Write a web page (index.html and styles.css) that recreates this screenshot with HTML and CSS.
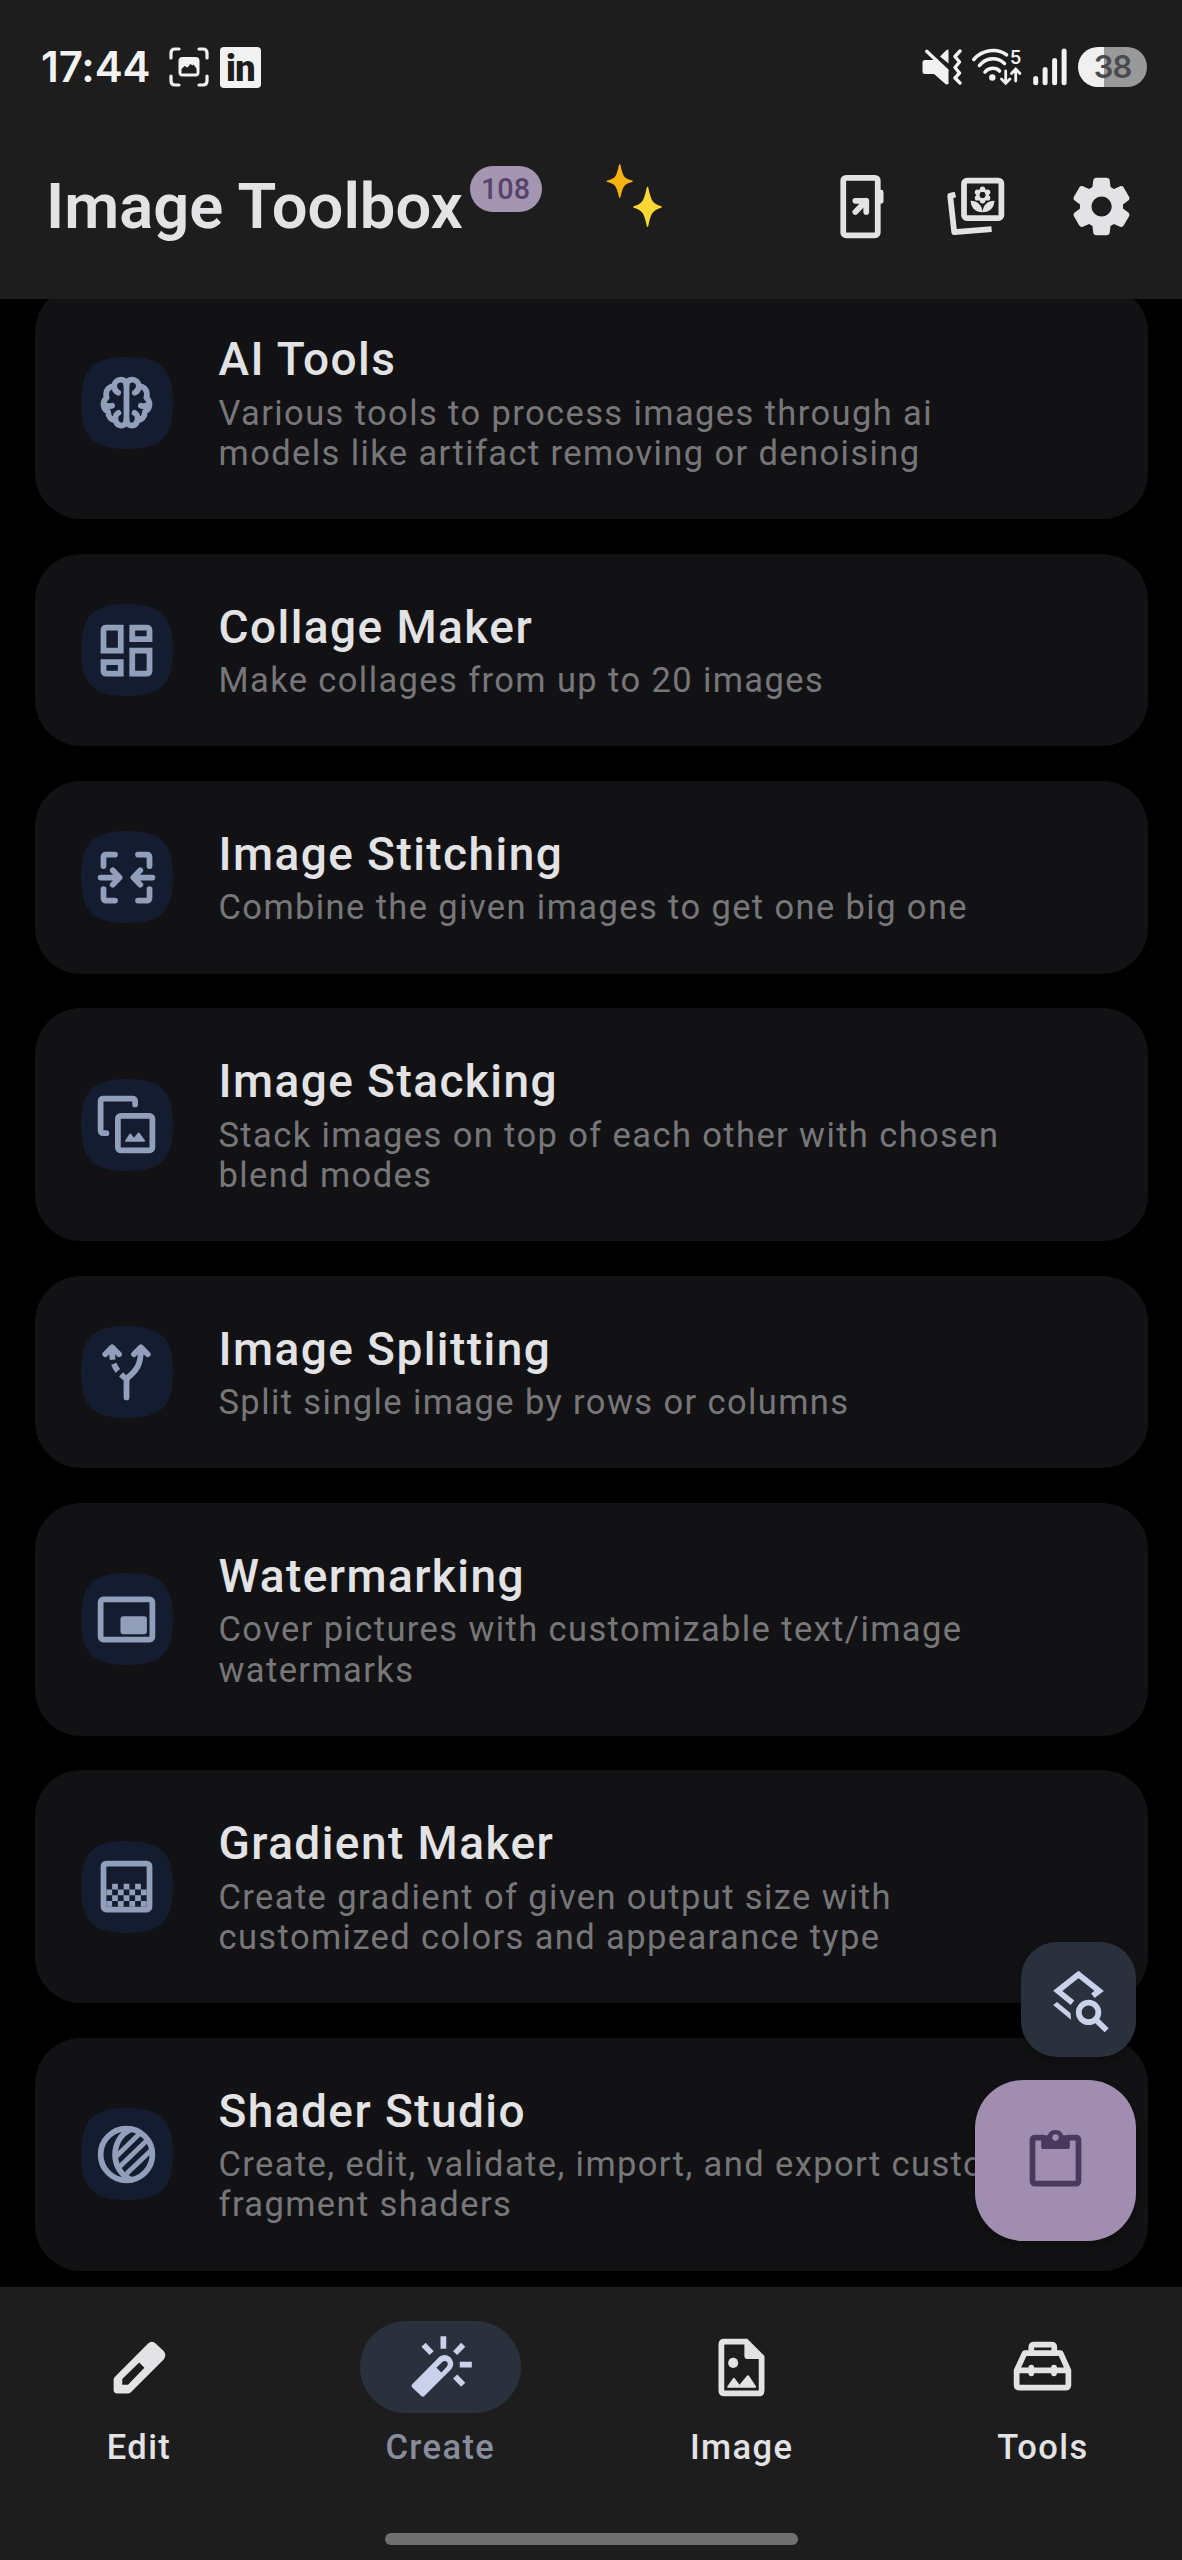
FILE: index.html
```html
<!DOCTYPE html>
<html lang="en">
<head>
<meta charset="utf-8">
<title>Image Toolbox</title>
<link rel="stylesheet" href="styles.css">
</head>
<body>
<svg class="defs" width="0" height="0" aria-hidden="true">
  <symbol id="squircle" viewBox="0 0 92 92"><path d="M46 0C80 0 92 12 92 46S80 92 46 92 0 80 0 46 12 0 46 0Z"/></symbol>
</svg>
<div class="screen">
  <header class="top">
    <div class="status">
      <span class="clock">17:44</span>
      <svg class="shot" width="40" height="40" viewBox="0 0 40 40"><path d="M2 11V6Q2 2 6 2H10M30 2H34Q38 2 38 6V11M38 29V34Q38 38 34 38H30M10 38H6Q2 38 2 34V29" fill="none" stroke="#f2f2f2" stroke-width="3.2" stroke-linecap="round"/><rect x="9.500" y="10" width="21" height="19.500" rx="4" fill="#f2f2f2"/><path d="M12.500 26.500V22l3-3 3 1.500 3-3.500 2 1.500 1-1 3 4v5z" fill="#1d1d1d"/></svg>
      <span class="linkedin">in</span>
      <span class="grow"></span>
      <svg width="40" height="38" viewBox="0 0 40 38" fill="#f2f2f2"><path d="M3 12H13L26.500 23.500V36L24 36.500 12 26H3Q.5 26 .5 23.500V14.500Q.5 12 3 12ZM26.500 2.500V15.500L18 8.500 24.500 2Q26.500 1 26.500 2.500Z"/><path d="M4.700 3.300L25 22.500M38 3L33 8.500 37.500 14 33 19.500 37.500 25 33 30 38 35" fill="none" stroke="#f2f2f2" stroke-width="3.400" stroke-linecap="round" stroke-linejoin="round"/></svg>
      <svg class="wifi" width="50" height="38" viewBox="0 0 50 38"><g fill="none" stroke="#f2f2f2" stroke-width="3.600" stroke-linecap="round"><path d="M1.800 11.500C10 1.800 25 -.5 34.500 6.800M7.500 17.500C13.500 9.500 25 8.500 32.500 15.500M13 24C16.500 19.500 24 19 27.500 23"/><path stroke-width="2.800" d="M33.700 23V35M29.500 31L33.700 35.200 37.900 31M43.700 33V21.500M39.500 25.500L43.700 21 47.900 25.500"/></g><circle cx="20.300" cy="29.500" r="3.200" fill="#f2f2f2"/><text x="38" y="15.500" class="band">5</text></svg>
      <svg class="signal" width="34" height="38" viewBox="0 0 34 38"><path d="M2.700 30.500V34.800M12.100 21.500V34.800M21.600 12.500V34.800M31.100 3V34.800" fill="none" stroke="#f2f2f2" stroke-width="5" stroke-linecap="round"/></svg>
      <span class="battery">38</span>
    </div>
    <div class="bar">
      <h1>Image Toolbox</h1>
      <span class="count">108</span>
      <svg class="sparkles" width="60" height="70" viewBox="0 0 60 70"><path fill="#f8b312" stroke="#f8b312" stroke-linejoin="round" stroke-width="1.500" d="M14.700 2C17 13.500 18.500 16.500 27 18.300 18.500 20.200 17 23 14.700 34 12.400 23 11 20.200 2.400 18.300 11 16.500 12.400 13.500 14.700 2Z"/><path fill="#fdd835" stroke="#fdd835" stroke-linejoin="round" stroke-width="1.500" d="M42.500 24.500C45 37.500 47 41.500 56 44 47 46.500 45 50 42.500 63 40 50 38 46.500 29 44 38 41.500 40 37.500 42.500 24.500Z"/></svg>
      <span class="grow"></span>
      <svg class="ic" viewBox="0 0 24 24"><g fill="none" stroke="#e3e3e5" stroke-width="2"><rect x="6" y="2" width="12" height="20" rx="1"/><path d="M10.200 10H14V13.900M14 10L10.200 13.900" stroke-linecap="round" stroke-linejoin="round"/></g><rect x="18" y="6.200" width="2" height="4.800" rx=".8" fill="#e3e3e5"/></svg>
      <svg class="ic" viewBox="0 0 24 24"><g fill="none" stroke="#e3e3e5" stroke-width="2"><rect x="8" y="3" width="13" height="13" rx="1"/><path d="M5 7.800L3.200 8.300 4.600 20.900 17.600 19.900" stroke-linejoin="round"/></g><g fill="#e3e3e5"><circle cx="14.450" cy="8" r="1.650" fill="none" stroke="#e3e3e5" stroke-width="1.100"/><circle cx="14.450" cy="6" r=".95"/><circle cx="14.450" cy="10" r=".95"/><circle cx="12.700" cy="7" r=".95"/><circle cx="16.200" cy="7" r=".95"/><circle cx="12.700" cy="9" r=".95"/><circle cx="16.200" cy="9" r=".95"/><path d="M10.300 10C12.800 10 14.300 11.600 14.450 14 12 14 10.400 12.500 10.300 10ZM18.600 10C16.100 10 14.600 11.600 14.450 14 16.900 14 18.500 12.500 18.600 10Z"/></g></svg>
      <svg class="ic" viewBox="0 0 24 24" fill="#e3e3e5"><path d="M19.500 12c0-.23-.01-.45-.03-.68l1.860-1.410c.4-.3.51-.86.26-1.300l-1.870-3.230c-.25-.44-.79-.62-1.250-.42l-2.150.91c-.37-.26-.76-.49-1.170-.68l-.29-2.310c-.06-.5-.49-.88-.99-.88h-3.730c-.51 0-.94.38-1 .88l-.29 2.310c-.41.19-.8.42-1.170.68l-2.150-.91c-.46-.2-1-.02-1.250.42L2.410 8.620c-.25.44-.14.99.26 1.300l1.860 1.410c-.02.22-.03.44-.03.67s.01.45.03.68l-1.860 1.410c-.4.3-.51.86-.26 1.300l1.870 3.230c.25.44.79.62 1.250.42l2.150-.91c.37.26.76.49 1.170.68l.29 2.310c.06.5.49.88.99.88h3.730c.5 0 .93-.38.99-.88l.29-2.310c.41-.19.8-.42 1.170-.68l2.150.91c.46.2 1 .02 1.250-.42l1.870-3.230c.25-.44.14-.99-.26-1.300l-1.860-1.410c.03-.23.04-.45.04-.68zm-7.460 3.500c-1.930 0-3.500-1.570-3.500-3.500s1.570-3.500 3.500-3.500 3.500 1.570 3.500 3.500-1.570 3.500-3.500 3.500z"/></svg>
    </div>
  </header>

  <main class="list">
    <article class="card">
      <div class="tile"><svg class="bg"><use href="#squircle"/></svg><svg class="glyph" viewBox="0 0 24 24"><g class="line"><path d="M12 5.800V18.200"/><path id="lobe" d="M12 5.900C12 4.700 11.100 4 10 4S7.800 4.900 7.700 6.200C6 6.400 4.900 7.600 4.900 9.100c0 .5.100.9.200 1.200C4.400 10.900 4 11.700 4 12.600c0 1.200.7 2.100 1.600 2.600 0 1.700 1.100 2.900 2.600 3.100.3 1 1 1.700 2 1.700 1.100 0 1.800-.8 1.800-1.900M7.700 6.200C7.700 7.400 8.200 8.200 9.100 8.600M4.300 12.600C5 13.300 6 13.400 7 13.100M9.200 15.600C8.300 16 8 17 8.200 18.300"/><use href="#lobe" transform="matrix(-1 0 0 1 24 0)"/></g></svg></div>
      <div class="copy"><h2>AI Tools</h2><p>Various tools to process images through ai models like artifact removing or denoising</p></div>
    </article>
    <article class="card">
      <div class="tile"><svg class="bg"><use href="#squircle"/></svg><svg class="glyph" viewBox="0 0 24 24" fill-rule="evenodd"><path d="M5 3H11V13H3V5Q3 3 5 3ZM5 5V11H9V5ZM13 3H19Q21 3 21 5V9H13ZM15 5V7H19V5ZM3 15H11V21H5Q3 21 3 19ZM5 17V19H9V17ZM13 11H21V19Q21 21 19 21H13ZM15 13V19H19V13Z"/></svg></div>
      <div class="copy"><h2>Collage Maker</h2><p>Make collages from up to 20 images</p></div>
    </article>
    <article class="card">
      <div class="tile"><svg class="bg"><use href="#squircle"/></svg><svg class="glyph" viewBox="0 0 24 24"><g class="line"><path d="M8 4H5Q4 4 4 5V8M16 4H19Q20 4 20 5V8M20 16V19Q20 20 19 20H16M8 20H5Q4 20 4 19V16M3 12H9M7.200 9.500L9.600 12 7.200 14.500M21 12H15M16.800 9.500L14.400 12 16.800 14.500"/></g></svg></div>
      <div class="copy"><h2>Image Stitching</h2><p>Combine the given images to get one big one</p></div>
    </article>
    <article class="card">
      <div class="tile"><svg class="bg"><use href="#squircle"/></svg><svg class="glyph" viewBox="0 0 24 24"><g class="line"><path d="M15 5V4Q15 3 14 3H4Q3 3 3 4V14Q3 15 4 15H5"/><rect x="9" y="9" width="12" height="12" rx="1"/></g><path d="M11.700 18Q11.300 18 11.600 17.500L13 15.300Q13.300 14.900 13.600 15.300L14.600 16.600 16 14.900Q16.300 14.600 16.600 15L18.400 17.500Q18.600 18 18.200 18Z"/></svg></div>
      <div class="copy"><h2>Image Stacking</h2><p>Stack images on top of each other with chosen blend modes</p></div>
    </article>
    <article class="card">
      <div class="tile"><svg class="bg"><use href="#squircle"/></svg><svg class="glyph" viewBox="0 0 24 24"><g class="line"><path d="M4.600 6L7 3.600 9.400 6M14.600 6L17 3.600 19.400 6M12 21V15.500Q12 14.500 12.700 13.900C15.500 11.600 17 9.500 17 4.500"/><path stroke-linecap="butt" d="M7 4V6.200L7.200 7.900M7.600 9.300Q8.100 10.700 9 11.800M10.100 13L11.600 14.400"/></g></svg></div>
      <div class="copy"><h2>Image Splitting</h2><p>Split single image by rows or columns</p></div>
    </article>
    <article class="card">
      <div class="tile"><svg class="bg"><use href="#squircle"/></svg><svg class="glyph" viewBox="0 0 24 24"><rect class="line" x="3" y="5" width="18" height="14" rx="1"/><rect x="9.900" y="10.900" width="9.200" height="6.200" rx="1"/></svg></div>
      <div class="copy"><h2>Watermarking</h2><p>Cover pictures with customizable text/image watermarks</p></div>
    </article>
    <article class="card">
      <div class="tile"><svg class="bg"><use href="#squircle"/></svg><svg class="glyph" viewBox="0 0 24 24"><rect class="line" x="4" y="4" width="16" height="16" rx="1"/><path d="M7 11h2v2h-2zM11 11h2v2h-2zM15 11h2v2h-2zM5 13h2v2h-2zM9 13h2v2h-2zM13 13h2v2h-2zM17 13h2v2h-2zM7 15h2v2h-2zM11 15h2v2h-2zM15 15h2v2h-2zM5 17h2v2h-2zM9 17h2v2h-2zM13 17h2v2h-2zM17 17h2v2h-2z"/></svg></div>
      <div class="copy"><h2>Gradient Maker</h2><p>Create gradient of given output size with customized colors and appearance type</p></div>
    </article>
    <article class="card">
      <div class="tile"><svg class="bg"><use href="#squircle"/></svg><svg class="glyph" viewBox="0 0 24 24"><g class="line"><circle cx="12" cy="12" r="9"/><path d="M13.500 3.300C6.200 6.500 6.200 17.500 13.500 20.700"/><path stroke-width="1.700" stroke-linecap="butt" d="M8.500 12.600L16.500 4.800M9.600 16.300L18.800 7.400M12 18.700L20.500 10.600"/></g></svg></div>
      <div class="copy"><h2>Shader Studio</h2><p>Create, edit, validate, import, and export custom fragment shaders</p></div>
    </article>
  </main>

  <div class="fabs">
    <div class="fab small"><svg class="ic" viewBox="0 0 24 24" fill="none" stroke="#c9d2ea" stroke-width="2"><path d="M9.900 13.100L4.800 9 12 3.300 19.200 9 17 10.700"/><path d="M3.200 13.900L4.500 12.900 9.200 16.700 9.400 19Z" fill="#c9d2ea" stroke="none"/><circle cx="15.500" cy="16.500" r="3.400"/><path d="M17.900 18.900L21.800 22.700"/></svg></div>
    <div class="fab big"><svg class="ic" viewBox="0 0 24 24"><path d="M8 4H5Q4 4 4 5V19Q4 20 5 20H19Q20 20 20 19V5Q20 4 19 4H16" fill="none" stroke="#4a395f" stroke-width="2"/><path fill="#4a395f" fill-rule="evenodd" d="M7 3.200H9.300A2.900 2.900 0 0 1 14.700 3.200H17V7Q17 8 16 8H8Q7 8 7 7ZM12 2.900A1.100 1.100 0 1 0 12 5.100 1.100 1.100 0 1 0 12 2.900Z"/></svg></div>
  </div>

  <footer class="bottom">
    <nav>
      <a class="tab"><span class="pill"><svg class="ic" viewBox="0 0 24 24"><path fill-rule="evenodd" d="M3 16.200Q3 15.700 3.400 15.300L14.900 3.700Q16.300 2.400 17.700 3.700L20.400 6.300Q21.600 7.800 20.400 9.200L9 20.600Q8.600 21 8.100 21H4.300Q3 21 3 19.700ZM6 16V18H8L13.700 12.100 11.900 10.300Z"/></svg></span><span class="label">Edit</span></a>
      <a class="tab active"><span class="pill"><svg class="ic" viewBox="0 0 24 24"><path fill-rule="evenodd" d="M2.100 18.900Q1.700 18.400 2.100 17.900L11.600 8.300Q13.500 6.900 15.500 8.500 17.300 10.600 15.800 12.500L6.300 22Q5.900 22.300 5.400 22ZM10.600 12.100L12.300 13.700 14.300 11.600Q14.800 10.700 14.300 10 13.500 9.400 12.700 10Z"/><path d="M13 1.100V5.500M18.700 11H22.900M6.100 4.100L8.900 7M19.900 4.100L17.100 7M17.100 15.100L19.900 18" fill="none" stroke="#c9d2ea" stroke-width="2"/></svg></span><span class="label">Create</span></a>
      <a class="tab"><span class="pill"><svg class="ic" viewBox="0 0 24 24"><path fill-rule="evenodd" d="M6 2H14L20 8V20Q20 22 18 22H6Q4 22 4 20V4Q4 2 6 2ZM6 4V20H18V9H14Q13 9 13 8V4Z"/><circle cx="9.100" cy="10.400" r="1.750"/><path d="M7.300 19Q6.800 19 7.100 18.500L9 15.800Q9.300 15.400 9.700 15.800L11.300 18 13.900 14.900Q14.300 14.500 14.600 14.900L17 18.500Q17.200 19 16.800 19Z"/></svg></span><span class="label">Image</span></a>
      <a class="tab"><span class="pill"><svg class="ic" viewBox="0 0 24 24"><path fill="none" stroke="#e3e3e5" stroke-width="2" stroke-linejoin="round" d="M8.100 7V5Q8.100 4 9.100 4H15.100Q16.100 4 16.100 5V7M5.800 7H18.300L21 13V18Q21 19 20 19H4Q3 19 3 18V13ZM3 13H21"/><path fill="none" stroke="#e3e3e5" stroke-width="2" stroke-linecap="round" d="M8.100 12V14M16 12V14"/></svg></span><span class="label">Tools</span></a>
    </nav>
    <div class="handle"></div>
  </footer>
</div>
</body>
</html>
```
FILE: styles.css
```css
* { box-sizing: border-box; margin: 0; padding: 0; }
body { background: #000; font-family: Roboto, sans-serif; }
svg { display: block; flex: none; }
.defs { position: absolute; }
.screen {
  position: relative;
  width: 1182px;
  height: 2560px;
  overflow: hidden;
  display: flex;
  flex-direction: column;
}
.grow { flex: 1; }
.ic { width: 69px; height: 69px; }

.top { height: 298.500px; flex: none; background: #1d1d1d; color: #e3e3e5; z-index: 1; }
.status { display: flex; align-items: center; height: 134.500px; padding: 0 35px 0 41px; color: #f2f2f2; }
.clock { font: 600 42px/50px Inter, sans-serif; width: 128px; white-space: nowrap; letter-spacing: -0.1px; }
.linkedin {
  width: 41px; height: 41px; margin-left: 11px;
  border-radius: 4px; background: #f2f2f2; color: #1d1d1d;
  font: 900 36px/45px Roboto, sans-serif; text-align: center; letter-spacing: -0.5px;
}
.wifi { margin-left: 10px; overflow: visible; }
.band { font: 600 18px Inter, sans-serif; fill: #f2f2f2; }
.signal { margin-left: 11px; }
.battery {
  width: 69px; height: 40px; margin-left: 11px; border-radius: 20px;
  background: linear-gradient(90deg, #f0f0f0 37%, #999 37%);
  color: #4b4b4d; font: 600 31px/40px Inter, sans-serif; text-align: center; letter-spacing: -1px;
}
.bar { display: flex; align-items: center; height: 144px; padding: 0 46px 0 46px; }
.bar .ic + .ic { margin-left: 46px; }
.bar .ic:last-child { margin-left: 57px; }
h1 { width: 417px; font-size: 63.250px; font-weight: 600; line-height: 74px; white-space: nowrap; letter-spacing: 0.050px; margin-top: -1px; }
.count {
  width: 72px; height: 46.500px; margin: -35px 0 0 6.500px; border-radius: 24px;
  background: #a495b0; color: #56426c;
  font-size: 28.750px; font-weight: 500; line-height: 46.500px; text-align: center;
}
.sparkles { margin-left: 63px; margin-top: -18px; }

.list { flex: 1; min-height: 0; padding: 0 34.500px; margin-top: -12.300px; display: flex; flex-direction: column; gap: 34.500px; }
.card {
  flex: none; display: flex; align-items: center; gap: 46px;
  padding: 46px; border-radius: 46px; background: #121214;
}
.tile { width: 92px; height: 92px; flex: none; display: grid; place-items: center; }
.tile svg { grid-area: 1 / 1; }
.bg { width: 92px; height: 92px; fill: #141d2f; }
.glyph { width: 69px; height: 69px; fill: #929fbb; }
.line { fill: none; stroke: #929fbb; stroke-width: 2; stroke-linecap: round; stroke-linejoin: round; }
.copy { width: 815px; }
h2 { font-size: 46px; font-weight: 500; line-height: 54px; letter-spacing: 1.430px; color: #e3e3e5; margin-bottom: 6.480px; }
p { font-size: 34.500px; line-height: 40.250px; letter-spacing: 1.390px; color: #77777a; }

.fabs { position: absolute; right: 46px; bottom: 319px; display: flex; flex-direction: column; align-items: flex-end; gap: 23px; z-index: 1; }
.fab { display: grid; place-items: center; box-shadow: 0 4px 10px rgba(0, 0, 0, .3); }
.small { width: 115px; height: 115px; border-radius: 36px; background: #2a303c; }
.big { width: 161px; height: 161px; border-radius: 48px; background: #a08daf; }

.bottom { flex: none; height: 273.300px; background: #1d1d1d; z-index: 1; padding-top: 34.500px; }
nav { display: flex; justify-content: space-between; padding: 0 58.500px; height: 212px; }
.tab { width: 161px; display: flex; flex-direction: column; align-items: center; fill: #e3e3e5; color: #e3e3e5; }
.pill { width: 161px; height: 92px; border-radius: 46px; display: grid; place-items: center; }
.active { fill: #c9d2ea; color: #898c9c; }
.active .pill { background: #2a303c; }
.label { margin-top: 10.500px; font-size: 34.500px; font-weight: 500; line-height: 46px; letter-spacing: 1.400px; }
.handle { width: 413px; height: 12px; border-radius: 6px; background: #707070; margin: 0 auto; }
```
